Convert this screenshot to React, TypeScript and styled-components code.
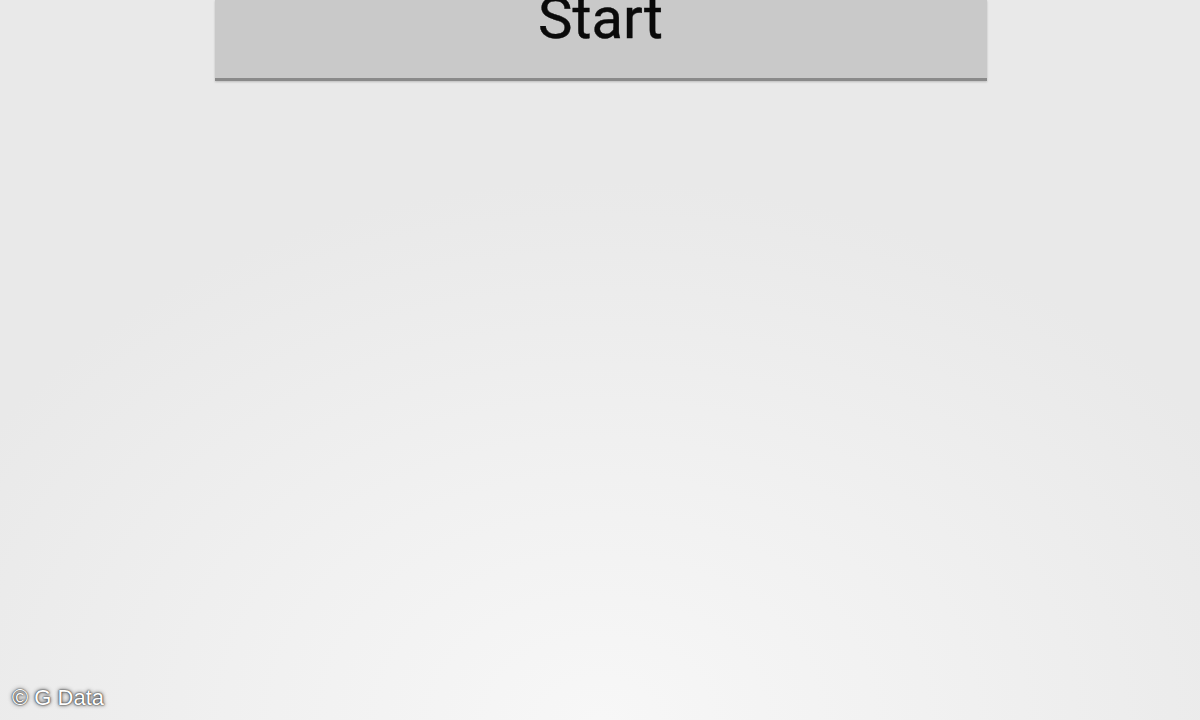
import React from 'react';
import styled, { createGlobalStyle } from 'styled-components';

const GlobalStyle = createGlobalStyle`
  html, body {
    margin: 0;
    padding: 0;
    height: 100%;
  }
  #root {
    height: 100%;
  }
`;

export default function App() {
  return (
    <>
      <GlobalStyle />
      <StyledScreen>
        <StyledStartButton>Start</StyledStartButton>
        <StyledCredit>© G Data</StyledCredit>
      </StyledScreen>
    </>
  );
}

const StyledScreen = styled.main`
  height: 720px;
  overflow: hidden;
  display: flex;
  flex-direction: column;
  align-items: center;
  background: radial-gradient(ellipse 60% 75% at 50% 100%, #f7f7f7 0%, #f1f1f1 45%, #e9e9e9 100%);
  font-family: Roboto, "Liberation Sans", sans-serif;
`;

const StyledStartButton = styled.button`
  width: 772px;
  height: 81px;
  margin-left: 1px;
  border: none;
  border-bottom: 3px solid #8a8a8a;
  box-shadow: 0 1px 2px rgba(0, 0, 0, 0.2);
  background: #c9c9c9;
  color: #0a0a0a;
  font-family: inherit;
  font-size: 58px;
  line-height: 1;
  padding: 0 0 31px;
  display: flex;
  align-items: flex-end;
  justify-content: center;
  box-sizing: border-box;
  -webkit-text-stroke: 0.4px #0a0a0a;
`;

const StyledCredit = styled.div`
  margin-top: auto;
  align-self: flex-start;
  padding: 0 0 9px 12px;
  color: #ffffff;
  font-family: "Liberation Sans", Arial, sans-serif;
  font-size: 22px;
  text-shadow: 0 0 4px #333, 0 0 2px #444, 0 0 1px #555;
`;
